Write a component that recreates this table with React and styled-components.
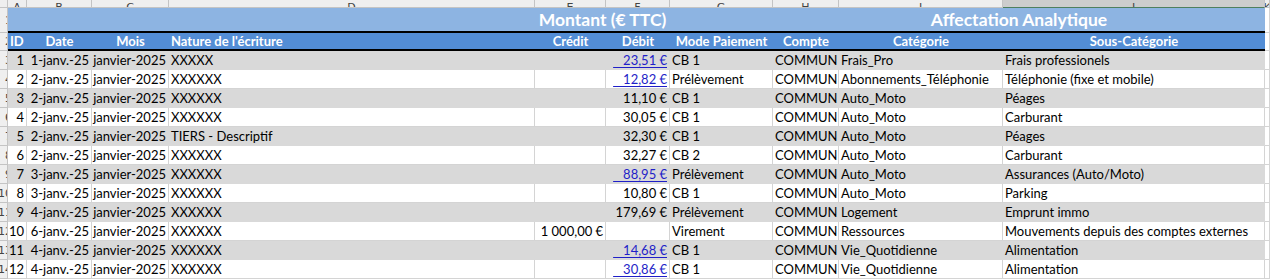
import React from "react";
import styled, { createGlobalStyle } from "styled-components";

const COLS = "8px 19px 65px 77px 366px 71px 64px 103px 66px 164px 262px 5px";

const GlobalStyle = createGlobalStyle`
  html, body {
    margin: 0;
    padding: 0;
    background: #ffffff;
  }
  body {
    font-family: Lato, "Liberation Sans", sans-serif;
    color: #000000;
    width: 1270px;
    height: 280px;
    overflow: hidden;
  }
`;

const Sheet = styled.div`
  display: flex;
  flex-direction: column;
  width: 1270px;
`;

const Row = styled.div`
  display: grid;
  grid-template-columns: ${COLS};
  height: ${(p) => p.$h}px;
`;

const ColLetter = styled.div`
  background: ${(p) => (p.$selected ? "#cdcdcd" : "#efefef")};
  border-right: 1px solid #c4c4c4;
  border-bottom: 1px solid ${(p) => (p.$selected ? "#4f7f5f" : "#c4c4c4")};
  overflow: hidden;
  display: flex;
  justify-content: center;
  align-items: flex-end;
  font-family: "DejaVu Sans", sans-serif;
  font-size: 11px;
  line-height: 11px;
  color: #444;
  span {
    margin-bottom: -6px;
  }
`;

const RowNum = styled.div`
  background: #efefef;
  border-right: 1px solid #c4c4c4;
  border-bottom: 1px solid #c4c4c4;
  overflow: hidden;
  display: flex;
  justify-content: flex-end;
  align-items: center;
  font-family: "DejaVu Sans", sans-serif;
  font-size: 11px;
  color: #444;
  white-space: nowrap;
  span {
    margin-right: -5px;
  }
`;

const TitleBand = styled.div`
  grid-column: ${(p) => p.$span};
  background: #8db4e2;
  border-bottom: 2px solid #000;
  color: #ffffff;
  font-weight: 700;
  font-size: 17.5px;
  display: flex;
  align-items: center;
  justify-content: center;
`;

const Gap = styled.div`
  border-right: 1px solid #d4d4d4;
  border-bottom: 1px solid #d4d4d4;
`;

const HeadCell = styled.div`
  background: #538dd5;
  border-bottom: 2px solid #000;
  color: #ffffff;
  font-weight: 700;
  font-size: 13px;
  display: flex;
  align-items: center;
  justify-content: ${(p) => (p.$left ? "flex-start" : "center")};
  padding-left: ${(p) => (p.$left ? 2 : 0)}px;
  white-space: nowrap;
  overflow: hidden;
`;

const Cell = styled.div`
  background: ${(p) => (p.$shade ? "#d9d9d9" : "#ffffff")};
  border-right: 1px solid ${(p) => (p.$shade ? "#d9d9d9" : "#d4d4d4")};
  border-bottom: 1px solid ${(p) => (p.$shade ? "#d9d9d9" : "#d4d4d4")};
  font-size: 13px;
  display: flex;
  align-items: center;
  justify-content: ${(p) => (p.$right ? "flex-end" : "flex-start")};
  padding: 0 2px;
  white-space: nowrap;
  overflow: hidden;
`;

const Link = styled.span`
  color: #1f1fc8;
  text-decoration: underline;
  text-underline-offset: 2px;
`;

const columns = ["A", "B", "C", "D", "E", "F", "G", "H", "I", "J", "K"];

const headers = [
  { t: "ID", left: true },
  { t: "Date" },
  { t: "Mois" },
  { t: "Nature de l'écriture", left: true },
  { t: "Crédit" },
  { t: "Débit" },
  { t: "Mode Paiement" },
  { t: "Compte" },
  { t: "Catégorie" },
  { t: "Sous-Catégorie" },
];

const rows = [
  [1, "1-janv.-25", "XXXXX", "", "23,51", true, "CB 1", "Frais_Pro", "Frais professionels"],
  [2, "2-janv.-25", "XXXXXX", "", "12,82", true, "Prélèvement", "Abonnements_Téléphonie", "Téléphonie (fixe et mobile)"],
  [3, "2-janv.-25", "XXXXXX", "", "11,10", false, "CB 1", "Auto_Moto", "Péages"],
  [4, "2-janv.-25", "XXXXXX", "", "30,05", false, "CB 1", "Auto_Moto", "Carburant"],
  [5, "2-janv.-25", "TIERS - Descriptif", "", "32,30", false, "CB 1", "Auto_Moto", "Péages"],
  [6, "2-janv.-25", "XXXXXX", "", "32,27", false, "CB 2", "Auto_Moto", "Carburant"],
  [7, "3-janv.-25", "XXXXXX", "", "88,95", true, "Prélèvement", "Auto_Moto", "Assurances (Auto/Moto)"],
  [8, "3-janv.-25", "XXXXXX", "", "10,80", false, "CB 1", "Auto_Moto", "Parking"],
  [9, "4-janv.-25", "XXXXXX", "", "179,69", false, "Prélèvement", "Logement", "Emprunt immo"],
  [10, "6-janv.-25", "XXXXXX", "1\u202f000,00", "", false, "Virement", "Ressources", "Mouvements depuis des comptes externes"],
  [11, "4-janv.-25", "XXXXXX", "", "14,68", true, "CB 1", "Vie_Quotidienne", "Alimentation"],
  [12, "4-janv.-25", "XXXXXX", "", "30,86", true, "CB 1", "Vie_Quotidienne", "Alimentation"],
];

const euro = (v) => (v ? `${v}\u202f€` : "");

export default function App() {
  return (
    <>
      <GlobalStyle />
      <Sheet>
        <Row $h={8}>
          <ColLetter />
          {columns.map((c) => (
            <ColLetter key={c} $selected={c === "J"}>
              <span>{c}</span>
            </ColLetter>
          ))}
        </Row>

        <Row $h={25}>
          <RowNum>
            <span>1</span>
          </RowNum>
          <TitleBand $span="2 / 6" />
          <TitleBand $span="6 / 8">Montant (€ TTC)</TitleBand>
          <TitleBand $span="8 / 9" />
          <TitleBand $span="9 / 12">Affectation Analytique</TitleBand>
          <Gap />
        </Row>

        <Row $h={18}>
          <RowNum>
            <span>2</span>
          </RowNum>
          {headers.map((h) => (
            <HeadCell key={h.t} $left={h.left}>
              {h.t}
            </HeadCell>
          ))}
          <Gap />
        </Row>

        {rows.map((r, i) => {
          const shade = i % 2 === 0;
          const [id, date, nature, credit, debit, link, mode, cat, sub] = r;
          return (
            <Row key={id} $h={19}>
              <RowNum>
                <span>{i + 3}</span>
              </RowNum>
              <Cell $shade={shade} $right>{id}</Cell>
              <Cell $shade={shade} $right>{date}</Cell>
              <Cell $shade={shade} $right>janvier-2025</Cell>
              <Cell $shade={shade}>{nature}</Cell>
              <Cell $shade={shade} $right>{euro(credit)}</Cell>
              <Cell $shade={shade} $right>
                {link ? <Link>{"\u00a0\u00a0\u00a0" + euro(debit)}</Link> : euro(debit)}
              </Cell>
              <Cell $shade={shade}>{mode}</Cell>
              <Cell $shade={shade}>COMMUN</Cell>
              <Cell $shade={shade}>{cat}</Cell>
              <Cell $shade={shade}>{sub}</Cell>
              <Gap />
            </Row>
          );
        })}
      </Sheet>
    </>
  );
}
